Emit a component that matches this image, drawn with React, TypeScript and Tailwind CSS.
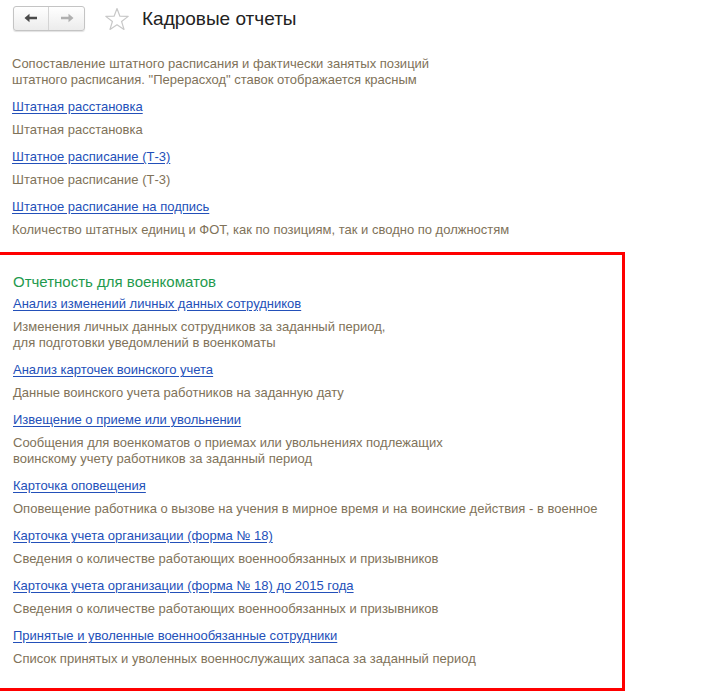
const items = [
  {
    link: "Анализ изменений личных данных сотрудников",
    desc: ["Изменения личных данных сотрудников за заданный период,", "для подготовки уведомлений в военкоматы"],
  },
  { link: "Анализ карточек воинского учета", desc: ["Данные воинского учета работников на заданную дату"] },
  {
    link: "Извещение о приеме или увольнении",
    desc: [
      "Сообщения для военкоматов о приемах или увольнениях подлежащих",
      "воинскому учету работников за заданный период",
    ],
  },
  {
    link: "Карточка оповещения",
    desc: ["Оповещение работника о вызове на учения в мирное время и на воинские действия - в военное"],
  },
  {
    link: "Карточка учета организации (форма № 18)",
    desc: ["Сведения о количестве работающих военнообязанных и призывников"],
  },
  {
    link: "Карточка учета организации (форма № 18) до 2015 года",
    desc: ["Сведения о количестве работающих военнообязанных и призывников"],
  },
  {
    link: "Принятые и уволенные военнообязанные сотрудники",
    desc: ["Список принятых и уволенных военнослужащих запаса за заданный период"],
  },
];

function Item({ link, desc, first }: { link: string; desc: string[]; first?: boolean }) {
  return (
    <div className={first ? "" : "mt-[11px]"}>
      <a href="#" className="block w-fit leading-4 text-[#2350b9] underline underline-offset-2">
        {link}
      </a>
      <div className="mt-[7px] leading-4 text-[#807259]">
        {desc.map((d) => (
          <div key={d}>{d}</div>
        ))}
      </div>
    </div>
  );
}

export default function App() {
  return (
    <div className="h-[694px] w-[727px] overflow-hidden bg-white text-[13px] font-['Liberation_Sans',Arial,sans-serif]">
      {/* Header */}
      <div className="flex items-center pl-[13px] pt-[5px]">
        <div className="flex h-[25px] w-[72px] overflow-hidden rounded-[3px] border border-[#c4c4c4] bg-gradient-to-b from-white to-[#ececec] shadow-[0_1px_1px_rgba(0,0,0,0.12)]">
          <button className="flex w-[36px] items-center justify-center border-r border-[#d4d4d4]">
            <svg width="14" height="10" viewBox="0 0 14 10">
              <path d="M0.5 5 L5.5 0.8 L5.5 3.8 L13 3.8 L13 6.2 L5.5 6.2 L5.5 9.2 Z" fill="#4a4a4a" />
            </svg>
          </button>
          <button className="flex w-[36px] items-center justify-center">
            <svg width="14" height="10" viewBox="0 0 14 10">
              <path d="M13.5 5 L8.5 0.8 L8.5 3.8 L1 3.8 L1 6.2 L8.5 6.2 L8.5 9.2 Z" fill="#b0b0b0" />
            </svg>
          </button>
        </div>
        <svg className="ml-[19px] mt-[2px]" width="26" height="24" viewBox="0 0 26 24">
          <path
            d="M13 1.5 L15.9 9.2 L24.2 9.4 L17.6 14.5 L20 22.4 L13 17.8 L6 22.4 L8.4 14.5 L1.8 9.4 L10.1 9.2 Z"
            fill="none"
            stroke="#c8c8c8"
            strokeWidth="1.2"
            strokeLinejoin="round"
          />
        </svg>
        <h1 className="ml-[12px] mt-[2px] text-[19px] leading-[24px] text-[#222]">Кадровые отчеты</h1>
      </div>

      {/* Main section */}
      <div className="pl-[12px] pt-[25px]">
        <div className="leading-4 text-[#807259]">
          <div>Сопоставление штатного расписания и фактически занятых позиций</div>
          <div>штатного расписания. "Перерасход" ставок отображается красным</div>
        </div>
        <Item link="Штатная расстановка" desc={["Штатная расстановка"]} />
        <Item link="Штатное расписание (Т-3)" desc={["Штатное расписание (Т-3)"]} />
        <Item
          link="Штатное расписание на подпись"
          desc={["Количество штатных единиц и ФОТ, как по позициям, так и сводно по должностям"]}
        />
      </div>

      {/* Highlighted group */}
      <div className="mt-[14px] w-[625px] border-[3px] border-l-0 border-[#ff0000] pb-[21px] pl-[13px] pt-[18px]">
        <div className="text-[15px] leading-[18px] text-[#1f9a4e]">Отчетность для военкоматов</div>
        <div className="mt-[5px]">
          {items.map((it, i) => (
            <Item key={it.link} link={it.link} desc={it.desc} first={i === 0} />
          ))}
        </div>
      </div>
    </div>
  );
}
